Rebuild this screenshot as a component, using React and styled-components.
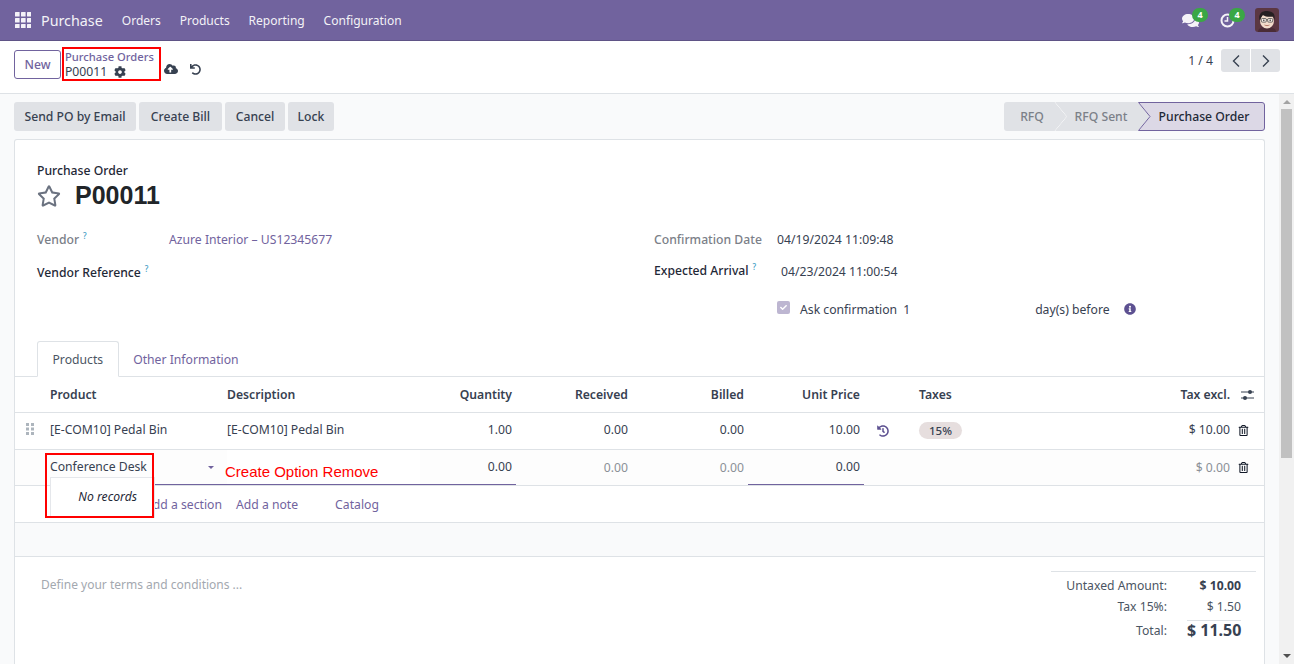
import React from "react";
import styled, { createGlobalStyle } from "styled-components";
import { FaCloudUploadAlt, FaUndo, FaCog, FaRegStar, FaRegTrashAlt, FaHistory, FaInfoCircle, FaComments, FaCheck } from "react-icons/fa";

const FONT = `"Noto Sans", "DejaVu Sans", sans-serif`;
const TEXT = "12.2px";

const Global = createGlobalStyle`
  html, body { margin: 0; padding: 0; height: 664px; overflow: hidden; }
  body { font-family: ${FONT}; font-size: ${TEXT}; color: #374151; background: #fff; }
  * { box-sizing: border-box; }
`;

const Page = styled.div`display: flex; flex-direction: column; width: 1294px; height: 664px; overflow: hidden;`;

const Navbar = styled.header`
  height: 41px; flex: none; display: flex; align-items: center; background: #71639e;
  border-bottom: 1px solid #5f5386; color: #fff; padding: 0 15px 0 15px;
`;
const AppGrid = styled.svg`width: 16px; height: 16px; margin-right: 10px; flex: none;`;
const Brand = styled.span`font-size: 14.3px; opacity: .92; margin-right: 19px;`;
const NavItem = styled.a`font-size: 12.05px; opacity: .92; margin-right: 18.8px;`;
const NavRight = styled.div`margin-left: auto; display: flex; align-items: center;`;
const SysIcon = styled.span`position: relative; display: flex; width: 18px; height: 18px; margin-right: 19px; align-items: center; justify-content: center; font-size: 17px; color: #f5f3f8;`;
const Badge = styled.b`
  position: absolute; top: -3px; left: 11px; min-width: 16px; height: 14px; border-radius: 7px; background: #3aa745;
  color: #fff; font-size: 9px; line-height: 14px; text-align: center; font-weight: 700;
`;
const Avatar = styled.svg`width: 24px; height: 24px; border-radius: 3px; display: block;`;

const ControlPanel = styled.div`
  height: 53px; flex: none; display: flex; align-items: flex-start; background: #fff; border-bottom: 1px solid #dee2e6;
  padding: 8px 14px 0 14px;
`;
const NewButton = styled.button`
  height: 29px; width: 47px; margin-top: 1px; border: 1px solid #71639e; border-radius: 3px; background: #fff; color: #71639e;
  font: 500 ${TEXT} ${FONT}; padding: 0;
`;
const Crumbs = styled.div`
  width: 99px; height: 34px; margin: -2px 0 0 1px; border: 2px solid #f00; padding: 0 0 0 1px; display: flex; flex-direction: column;
  line-height: 15px;
`;
const CrumbLink = styled.a`color: #71639e; font-size: 11.2px; font-weight: 500; white-space: nowrap;`;
const CrumbCurrent = styled.span`display: flex; align-items: center; gap: 7px; font-size: ${TEXT}; color: #374151;`;
const SaveIcons = styled.div`display: flex; align-items: center; gap: 12px; height: 30px; margin: 5px 0 0 3px; font-size: 13px; color: #374151;`;
const Pager = styled.div`margin-left: auto; display: flex; align-items: center; gap: 8px; height: 23px;`;
const PagerText = styled.span`font-size: ${TEXT};`;
const PagerButtons = styled.div`display: flex; gap: 1px;`;
const PagerBtn = styled.button`
  width: 29px; height: 23px; border: 0; background: #e0e2e6; color: #374151; padding: 0; display: flex; align-items: center; justify-content: center;
  border-radius: ${p => (p.$first ? "3px 0 0 3px" : "0 3px 3px 0")};
`;

const Body = styled.div`flex: 1; min-height: 0; display: flex; background: #f9fafb;`;
const Content = styled.main`flex: 1; min-width: 0; padding: 8px 14px 0; display: flex; flex-direction: column;`;

const Scrollbar = styled.div`width: 15px; flex: none; background: #f1f1f1; display: flex; flex-direction: column; align-items: center;`;
const ScrollArrow = styled.div`
  width: 0; height: 0; flex: none; border-left: 4px solid transparent; border-right: 4px solid transparent;
  ${p => (p.$up ? "margin-top: 6px; border-bottom: 4px solid #a3a3a3;" : "margin-bottom: 6px; border-top: 4px solid #505050;")}
`;
const ScrollThumb = styled.div`width: 11px; height: 349px; flex: none; margin-top: 5px; background: #c1c1c1;`;
const ScrollSpacer = styled.div`flex: 1;`;

const ActionRow = styled.div`display: flex; justify-content: space-between; height: 29px; flex: none; margin-bottom: 8px;`;
const Actions = styled.div`display: flex; gap: 3px;`;
const ActionBtn = styled.button`
  width: ${p => p.$w}px; height: 29px; padding: 0; border: 0; border-radius: 3px; background: #e0e2e6; color: #374151; font: 500 ${TEXT} ${FONT};
`;
const Status = styled.div`display: flex; height: 29px;`;
const Stage = styled.span`
  position: relative; height: 29px; display: flex; align-items: center; justify-content: center; width: ${p => p.$w}px;
  margin-left: ${p => (p.$first ? 0 : -12)}px; padding: 0 ${p => p.$pr || 0}px 0 ${p => p.$pl || 0}px;
  font-size: ${TEXT}; font-weight: 500; color: ${p => (p.$active ? "#1f2937" : "#7b8088")};
`;
const StageShape = styled.svg`position: absolute; inset: 0; width: 100%; height: 100%; z-index: 0;`;
const StageLabel = styled.span`position: relative; z-index: 1;`;

const Sheet = styled.section`
  flex: 1; background: #fff; border: 1px solid #dee2e6; border-bottom: 0; border-radius: 3px 3px 0 0; position: relative; display: flex; flex-direction: column;
`;
const Head = styled.div`padding: 23px 22px 0; height: 84px; flex: none;`;
const Eyebrow = styled.div`font-size: ${TEXT}; font-weight: 500; color: #1f2937; line-height: 16px;`;
const TitleRow = styled.div`display: flex; align-items: center; gap: 14px; height: 31px; margin-top: 1px;`;
const Star = styled.span`display: flex; font-size: 24px; color: #6b7280;`;
const Title = styled.h1`margin: 0; font: 700 25px "Liberation Sans", sans-serif; color: #212529;`;

const FieldGrid = styled.div`display: grid; grid-template-columns: 617px 1fr; padding: 0 22px; height: 117px; flex: none;`;
const FieldColumn = styled.div`display: flex; flex-direction: column;`;
const Field = styled.div`display: flex; align-items: center; height: 32px; line-height: 16px;`;
const FieldLabel = styled.span`
  width: ${p => p.$w}px; flex: none; font-size: ${TEXT}; font-weight: 500; white-space: nowrap; margin-top: ${p => p.$dy || 0}px;
  color: ${p => (p.$strong ? "#1f2937" : "#7b8088")};
`;
const Help = styled.sup`color: #3b9cc4; font-size: 8px; font-weight: 500; margin-left: 4px; vertical-align: 5px; line-height: 0;`;
const FieldValue = styled.span`font-size: ${TEXT}; white-space: nowrap;`;
const FieldLink = styled(FieldValue)`color: #71639e;`;
const CheckRow = styled.div`display: flex; align-items: center; height: 20px; padding-left: 123px; margin-top: 11px;`;
const CheckBox = styled.span`
  width: 13px; height: 13px; border-radius: 2px; background: #bdb6d1; color: #fff; font-size: 7px; display: flex; align-items: center; justify-content: center; margin: -4px 10px 0 0;
`;
const CheckNum = styled.span`margin-left: 6px; width: 132px;`;
const CheckInfo = styled.span`display: flex; color: #5d5191; font-size: 12px; margin-left: 14px;`;

const Tabs = styled.div`display: flex; height: 36px; padding-left: 22px; border-bottom: 1px solid #dee2e6; flex: none;`;
const Tab = styled.a`
  height: 36px; padding: 0 14.5px; display: flex; align-items: center; font-size: ${TEXT};
  color: ${p => (p.$active ? "#4b5563" : "#71639e")};
  ${p => p.$active && "border: 1px solid #dee2e6; border-bottom: 1px solid #fff; border-radius: 3px 3px 0 0; background: #fff;"}
`;

const COLS = "35px 177px 193px 96px 116px 116px 116px 55px 1fr 110px";
const Row = styled.div`
  display: grid; grid-template-columns: ${COLS}; align-items: center; height: ${p => p.$h || 37}px; flex: none;
  border-bottom: 1px solid #dee2e6; background: ${p => p.$bg || "#fff"}; padding-bottom: ${p => p.$pb || 0}px;
`;
const HCell = styled.div`
  font-size: ${TEXT}; font-weight: 600; color: #374151; white-space: nowrap;
  text-align: ${p => (p.$right ? "right" : "left")}; padding-right: ${p => (p.$right ? "4px" : 0)};
`;
const Cell = styled.div`
  font-size: ${TEXT}; white-space: nowrap;
  color: ${p => (p.$muted ? "#8b9097" : "#374151")};
  text-align: ${p => (p.$right ? "right" : "left")}; padding-right: ${p => (p.$right ? "4px" : 0)};
`;
const Handle = styled.svg`width: 8px; height: 12px; margin-left: 11px; display: block;`;
const Underlined = styled(Cell)`
  height: 35px; line-height: 33px; position: relative; background: ${p => (p.$white ? "#fff" : "transparent")};
  border-bottom: 1px solid #71639e;
`;
const Caret = styled.span`
  position: absolute; right: 13px; top: 16px; width: 0; height: 0; border-left: 3px solid transparent; border-right: 3px solid transparent; border-top: 3px solid #71639e;
`;
const TaxPill = styled.span`
  display: inline-block; height: 17px; line-height: 17px; padding: 0 10px; border-radius: 9px; background: #e6dede; font-size: 11.5px; font-weight: 500; color: #374151;
`;
const RevertIcon = styled.div`display: flex; font-size: 12px; color: #5d5191; padding-left: 13px; margin-top: 4px;`;
const PillCell = styled.div`margin-top: 2px;`;
const LastCol = styled.div`
  display: grid; grid-template-columns: 1fr 34px; align-items: center; font-size: ${TEXT};
  color: ${p => (p.$muted ? "#8b9097" : "#374151")}; white-space: nowrap; text-align: right; font-weight: ${p => (p.$head ? 600 : 400)};
`;
const LastIcon = styled.span`display: flex; font-size: ${p => p.$size}px; color: ${p => p.$c}; padding-left: ${p => p.$pad}px; margin-top: ${p => p.$dy || 0}px;`;
const AddLinks = styled.div`grid-column: 2 / -1; display: flex; padding-left: 95px; font-size: ${TEXT}; color: #71639e;`;
const AddLink = styled.a`margin-right: ${p => p.$mr}px;`;

const RedBox = styled.div`
  position: absolute; left: 30px; top: 313px; width: 109px; height: 65px; border: 2px solid #f00; z-index: 3; pointer-events: none;
`;
const Dropdown = styled.div`
  position: absolute; left: 35px; top: 337px; width: 105px; height: 41px; background: #fff; border: 1px solid #e5e7eb; z-index: 2;
  display: flex; align-items: center; justify-content: flex-end; padding: 0 17px 2px 0; font-style: italic; font-size: ${TEXT}; color: #1f2937;
`;
const Annotation = styled.div`
  position: absolute; left: 210px; top: 323px; z-index: 3; color: #f00; font: 15px/18px "Liberation Sans", sans-serif; white-space: nowrap;
`;

const Footer = styled.div`flex: 1; display: flex; justify-content: space-between; padding: 14px 8px 0 26px;`;
const Terms = styled.div`font-size: 12px; color: #a3a8af; padding-top: 5px;`;
const Totals = styled.div`width: 205px; border-top: 1px solid #dee2e6; padding: 3px 15px 0 0; align-self: flex-start;`;
const TotalRow = styled.div`
  display: grid; grid-template-columns: 1fr 74px; align-items: center; height: ${p => p.$h || 21}px; font-size: ${TEXT}; text-align: right;
`;
const TotalLabel = styled.span`color: #4b5563;`;
const TotalValue = styled.span`color: ${p => (p.$b ? "#374151" : "#4b5563")}; font-weight: ${p => (p.$b ? 700 : 400)};`;
const GrandValue = styled.span`
  justify-self: end; width: 54px; height: 20px; border-top: 1px solid #dee2e6; font-size: 16px; font-weight: 700; color: #374151; line-height: 19px; white-space: nowrap;
`;

function StageBg({ active, first, w }) {
  const h = 29;
  const box = `0 0 ${w} ${h}`;
  if (active) return (
    <StageShape viewBox={box}>
      <path d={`M.5 .5 H${w - 3} Q${w - .5} .5 ${w - .5} 3 V${h - 3} Q${w - .5} ${h - .5} ${w - 3} ${h - .5} H.5 L12 14.5 Z`} fill="#dcd8e6" stroke="#71639e" />
    </StageShape>
  );
  return (
    <StageShape viewBox={box}>
      <path d={first ? `M3 0 H${w - 12} L${w} 14.5 L${w - 12} ${h} H3 Q0 ${h} 0 ${h - 3} V3 Q0 0 3 0 Z` : `M0 0 H${w - 12} L${w} 14.5 L${w - 12} ${h} H0 L12 14.5 Z`} fill="#e0e2e6" />
      <path d={`M${w - 12} 0 L${w} 14.5 L${w - 12} ${h}`} fill="none" stroke="#fff" />
    </StageShape>
  );
}

const dots = [0, 6, 12].flatMap(y => [0, 6, 12].map(x => [x, y]));

export default function App() {
  return (
    <Page>
      <Global />
      <Navbar>
        <AppGrid viewBox="0 0 16 16">
          {dots.map(([x, y]) => <rect key={`${x}-${y}`} x={x} y={y} width="4.6" height="4.6" rx=".5" fill="#f4f2f8" />)}
        </AppGrid>
        <Brand>Purchase</Brand>
        <NavItem>Orders</NavItem>
        <NavItem>Products</NavItem>
        <NavItem>Reporting</NavItem>
        <NavItem>Configuration</NavItem>
        <NavRight>
          <SysIcon><FaComments /><Badge>4</Badge></SysIcon>
          <SysIcon>
            <svg width="15" height="15" viewBox="0 0 15 15"><circle cx="7.5" cy="7.5" r="6" fill="none" stroke="#f5f3f8" strokeWidth="2" /><path d="M7.5 4v4H4.5" fill="none" stroke="#f5f3f8" strokeWidth="1.5" /></svg>
            <Badge>4</Badge>
          </SysIcon>
          <Avatar viewBox="0 0 24 24">
            <rect width="24" height="24" fill="#5b3742" />
            <path d="M3 24c0-4 4-5 9-5s9 1 9 5z" fill="#4a2c36" />
            <ellipse cx="12" cy="13" rx="7" ry="7.5" fill="#f2dccb" />
            <path d="M4.5 12C3 5 8 2.5 12.5 3s8 1.5 7 9l-1.300-3.500c-3.500 .5-7.500 .5-10.500-1.500-.5 1.500-2 2.500-2.200 4.500z" fill="#262022" />
            <rect x="6.3" y="10.5" width="5" height="3.6" rx="1" fill="#f7eee6" stroke="#4b4b4b" strokeWidth=".8" />
            <rect x="12.7" y="10.5" width="5" height="3.6" rx="1" fill="#f7eee6" stroke="#4b4b4b" strokeWidth=".8" />
            <path d="M11.3 11.5h1.400" stroke="#4b4b4b" strokeWidth=".7" />
            <circle cx="8.8" cy="12.3" r=".8" fill="#333" /><circle cx="15.2" cy="12.3" r=".8" fill="#333" />
            <path d="M9.5 17c1.300 .8 3.700 .8 5 0" fill="none" stroke="#a5604f" strokeWidth=".8" />
          </Avatar>
        </NavRight>
      </Navbar>
      <ControlPanel>
        <NewButton>New</NewButton>
        <Crumbs>
          <CrumbLink>Purchase Orders</CrumbLink>
          <CrumbCurrent>P00011 <FaCog size={12} /></CrumbCurrent>
        </Crumbs>
        <SaveIcons><FaCloudUploadAlt size={14} /><FaUndo size={11} /></SaveIcons>
        <Pager>
          <PagerText>1 / 4</PagerText>
          <PagerButtons>
            <PagerBtn $first><svg width="10" height="14" viewBox="0 0 10 14"><path d="M8 1.5 2.500 7 8 12.500" fill="none" stroke="#374151" strokeWidth="1.4" /></svg></PagerBtn>
            <PagerBtn><svg width="10" height="14" viewBox="0 0 10 14"><path d="M2 1.5 7.500 7 2 12.500" fill="none" stroke="#374151" strokeWidth="1.4" /></svg></PagerBtn>
          </PagerButtons>
        </Pager>
      </ControlPanel>
      <Body>
        <Content>
          <ActionRow>
            <Actions>
              <ActionBtn $w={122}>Send PO by Email</ActionBtn>
              <ActionBtn $w={83}>Create Bill</ActionBtn>
              <ActionBtn $w={60}>Cancel</ActionBtn>
              <ActionBtn $w={46}>Lock</ActionBtn>
            </Actions>
            <Status>
              <Stage $first $w={63} $pr={7}><StageBg first w={63} /><StageLabel>RFQ</StageLabel></Stage>
              <Stage $w={95} $pr={3}><StageBg w={95} /><StageLabel>RFQ Sent</StageLabel></Stage>
              <Stage $w={127} $pl={5} $active><StageBg active w={127} /><StageLabel>Purchase Order</StageLabel></Stage>
            </Status>
          </ActionRow>
          <Sheet>
            <Head>
              <Eyebrow>Purchase Order</Eyebrow>
              <TitleRow><Star><FaRegStar /></Star><Title>P00011</Title></TitleRow>
            </Head>
            <FieldGrid>
              <FieldColumn>
                <Field><FieldLabel $w={132}>Vendor<Help>?</Help></FieldLabel><FieldLink>Azure Interior – US12345677</FieldLink></Field>
                <Field><FieldLabel $w={132} $dy={2} $strong>Vendor Reference<Help>?</Help></FieldLabel></Field>
              </FieldColumn>
              <FieldColumn>
                <Field><FieldLabel $w={123}>Confirmation Date</FieldLabel><FieldValue>04/19/2024 11:09:48</FieldValue></Field>
                <Field><FieldLabel $w={127} $dy={-3} $strong>Expected Arrival<Help>?</Help></FieldLabel><FieldValue>04/23/2024 11:00:54</FieldValue></Field>
                <CheckRow>
                  <CheckBox><FaCheck /></CheckBox>
                  <span>Ask confirmation</span>
                  <CheckNum>1</CheckNum>
                  <span>day(s) before</span>
                  <CheckInfo><FaInfoCircle /></CheckInfo>
                </CheckRow>
              </FieldColumn>
            </FieldGrid>
            <Tabs>
              <Tab $active>Products</Tab>
              <Tab>Other Information</Tab>
            </Tabs>
            <Row $h={36}>
              <span />
              <HCell>Product</HCell>
              <HCell>Description</HCell>
              <HCell $right>Quantity</HCell>
              <HCell $right>Received</HCell>
              <HCell $right>Billed</HCell>
              <HCell $right>Unit Price</HCell>
              <span />
              <HCell>Taxes</HCell>
              <LastCol $head>Tax excl.
                <LastIcon $size={12} $c="#374151" $pad={11}>
                  <svg width="13" height="10" viewBox="0 0 13 10">
                    <path d="M0 2h13M0 8h13" stroke="#374151" strokeWidth="1" />
                    <circle cx="9" cy="2" r="2" fill="#374151" /><circle cx="4" cy="8" r="2" fill="#374151" />
                  </svg>
                </LastIcon>
              </LastCol>
            </Row>
            <Row $pb={4}>
              <Handle viewBox="0 0 8 12">{[0, 4.5, 9].flatMap(y => [0, 5].map(x => <rect key={`${x}${y}`} x={x} y={y} width="3" height="3" fill="#adb5bd" />))}</Handle>
              <Cell>[E-COM10] Pedal Bin</Cell>
              <Cell>[E-COM10] Pedal Bin</Cell>
              <Cell $right>1.00</Cell>
              <Cell $right>0.00</Cell>
              <Cell $right>0.00</Cell>
              <Cell $right>10.00</Cell>
              <RevertIcon><FaHistory /></RevertIcon>
              <PillCell><TaxPill>15%</TaxPill></PillCell>
              <LastCol>$ 10.00<LastIcon $size={11} $c="#111827" $pad={8} $dy={2}><FaRegTrashAlt /></LastIcon></LastCol>
            </Row>
            <Row $h={36} $bg="#fdfdfd">
              <span />
              <Underlined>Conference Desk<Caret /></Underlined>
              <Underlined $white />
              <Underlined $right>0.00</Underlined>
              <Cell $right $muted>0.00</Cell>
              <Cell $right $muted>0.00</Cell>
              <Underlined $right>0.00</Underlined>
              <span />
              <span />
              <LastCol $muted>$ 0.00<LastIcon $size={11} $c="#111827" $pad={8}><FaRegTrashAlt /></LastIcon></LastCol>
            </Row>
            <Row>
              <AddLinks>
                <AddLink $mr={14}>Add a section</AddLink>
                <AddLink $mr={37}>Add a note</AddLink>
                <AddLink $mr={0}>Catalog</AddLink>
              </AddLinks>
            </Row>
            <Row $h={34} $bg="#f9fafb" />
            <Footer>
              <Terms>Define your terms and conditions ...</Terms>
              <Totals>
                <TotalRow><TotalLabel>Untaxed Amount:</TotalLabel><TotalValue $b>$ 10.00</TotalValue></TotalRow>
                <TotalRow><TotalLabel>Tax 15%:</TotalLabel><TotalValue>$ 1.50</TotalValue></TotalRow>
                <TotalRow $h={26}><TotalLabel>Total:</TotalLabel><GrandValue>$ 11.50</GrandValue></TotalRow>
              </Totals>
            </Footer>
            <Dropdown>No records</Dropdown>
            <RedBox />
            <Annotation>Create Option Remove</Annotation>
          </Sheet>
        </Content>
        <Scrollbar>
          <ScrollArrow $up />
          <ScrollThumb />
          <ScrollSpacer />
          <ScrollArrow />
        </Scrollbar>
      </Body>
    </Page>
  );
}
